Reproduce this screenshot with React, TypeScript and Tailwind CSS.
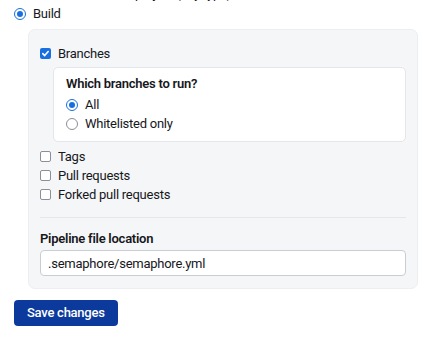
import React, { useState } from 'react';

const font = { fontFamily: 'Roboto, "Liberation Sans", sans-serif' };

const Radio: React.FC<{ checked: boolean; label: string; onClick: () => void }> = ({ checked, label, onClick }) => (
  <label onClick={onClick} className="flex items-center gap-[7px] cursor-pointer text-[13px] tracking-[-0.25px] leading-[19px] text-[#16181c]">
    <span
      className={`w-[12px] h-[12px] rounded-full flex items-center justify-center shrink-0 ${
        checked ? 'border-[1.5px] border-[#1a6fe0]' : 'border border-[#8a8f98] bg-white'
      }`}
    >
      {checked && <span className="w-[6px] h-[6px] rounded-full bg-[#1a6fe0]" />}
    </span>
    {label}
  </label>
);

const Check: React.FC<{ checked: boolean; label: string; onClick: () => void }> = ({ checked, label, onClick }) => (
  <label onClick={onClick} className="flex items-center gap-[7px] cursor-pointer text-[13px] tracking-[-0.25px] leading-[19px] text-[#16181c]">
    <span
      className={`w-[11px] h-[11px] rounded-[2px] flex items-center justify-center shrink-0 ${
        checked ? 'bg-[#1a6fe0]' : 'border border-[#8a8f98] bg-white'
      }`}
    >
      {checked && (
        <svg width="9" height="9" viewBox="0 0 10 10" fill="none">
          <path d="M2 5.2 4.1 7.3 8 2.8" stroke="white" strokeWidth="1.8" strokeLinecap="round" strokeLinejoin="round" />
        </svg>
      )}
    </span>
    {label}
  </label>
);

export default function App() {
  const [mode, setMode] = useState('build');
  const [which, setWhich] = useState('all');
  const [opts, setOpts] = useState({ branches: true, tags: false, prs: false, forked: false });
  const toggle = (k: keyof typeof opts) => setOpts(o => ({ ...o, [k]: !o[k] }));

  return (
    <div style={font} className="w-[435px] h-[340px] bg-white overflow-hidden">
      <div className="mt-[-16px] pl-[118px] text-[13px] tracking-[-0.25px] leading-[19px] text-[#16181c]">on project (any type)</div>
      <div className="pl-[14px] pt-[1px]">
        <Radio checked={mode === 'build'} label="Build" onClick={() => setMode('build')} />
      </div>

      <div className="ml-[28px] mr-[17px] mt-[6px] bg-[#f5f6f8] border border-[#eceef1] rounded-[7px] px-[11px] pt-[14px] pb-[12px]">
        <Check checked={opts.branches} label="Branches" onClick={() => toggle('branches')} />

        <div className="ml-[13px] mt-[4px] bg-white border border-[#e3e6ea] rounded-[5px] px-[12px] pt-[6px] pb-[8px]">
          <div className="text-[13px] tracking-[-0.25px] font-semibold leading-[19px] text-[#16181c] mb-[2px]">Which branches to run?</div>
          <div className="flex flex-col">
            <Radio checked={which === 'all'} label="All" onClick={() => setWhich('all')} />
            <Radio checked={which === 'white'} label="Whitelisted only" onClick={() => setWhich('white')} />
          </div>
        </div>

        <div className="mt-[5px] flex flex-col">
          <Check checked={opts.tags} label="Tags" onClick={() => toggle('tags')} />
          <Check checked={opts.prs} label="Pull requests" onClick={() => toggle('prs')} />
          <Check checked={opts.forked} label="Forked pull requests" onClick={() => toggle('forked')} />
        </div>

        <div className="mt-[13px] border-t border-[#e3e6ea]" />

        <div className="mt-[11px] text-[13px] tracking-[-0.25px] font-semibold leading-[19px] text-[#16181c]">Pipeline file location</div>
        <input
          defaultValue=".semaphore/semaphore.yml"
          className="mt-[2px] w-full h-[26px] bg-white border border-[#c9ced4] rounded-[4px] px-[7px] text-[13px] tracking-[-0.25px] text-[#16181c] outline-none"
          style={font}
        />
      </div>

      <div className="pl-[14px] mt-[11px]">
        <button className="h-[26px] px-[13px] rounded-[4px] bg-[#0c3a9c] text-white text-[13px] tracking-[-0.25px] font-medium">Save changes</button>
      </div>
    </div>
  );
}
